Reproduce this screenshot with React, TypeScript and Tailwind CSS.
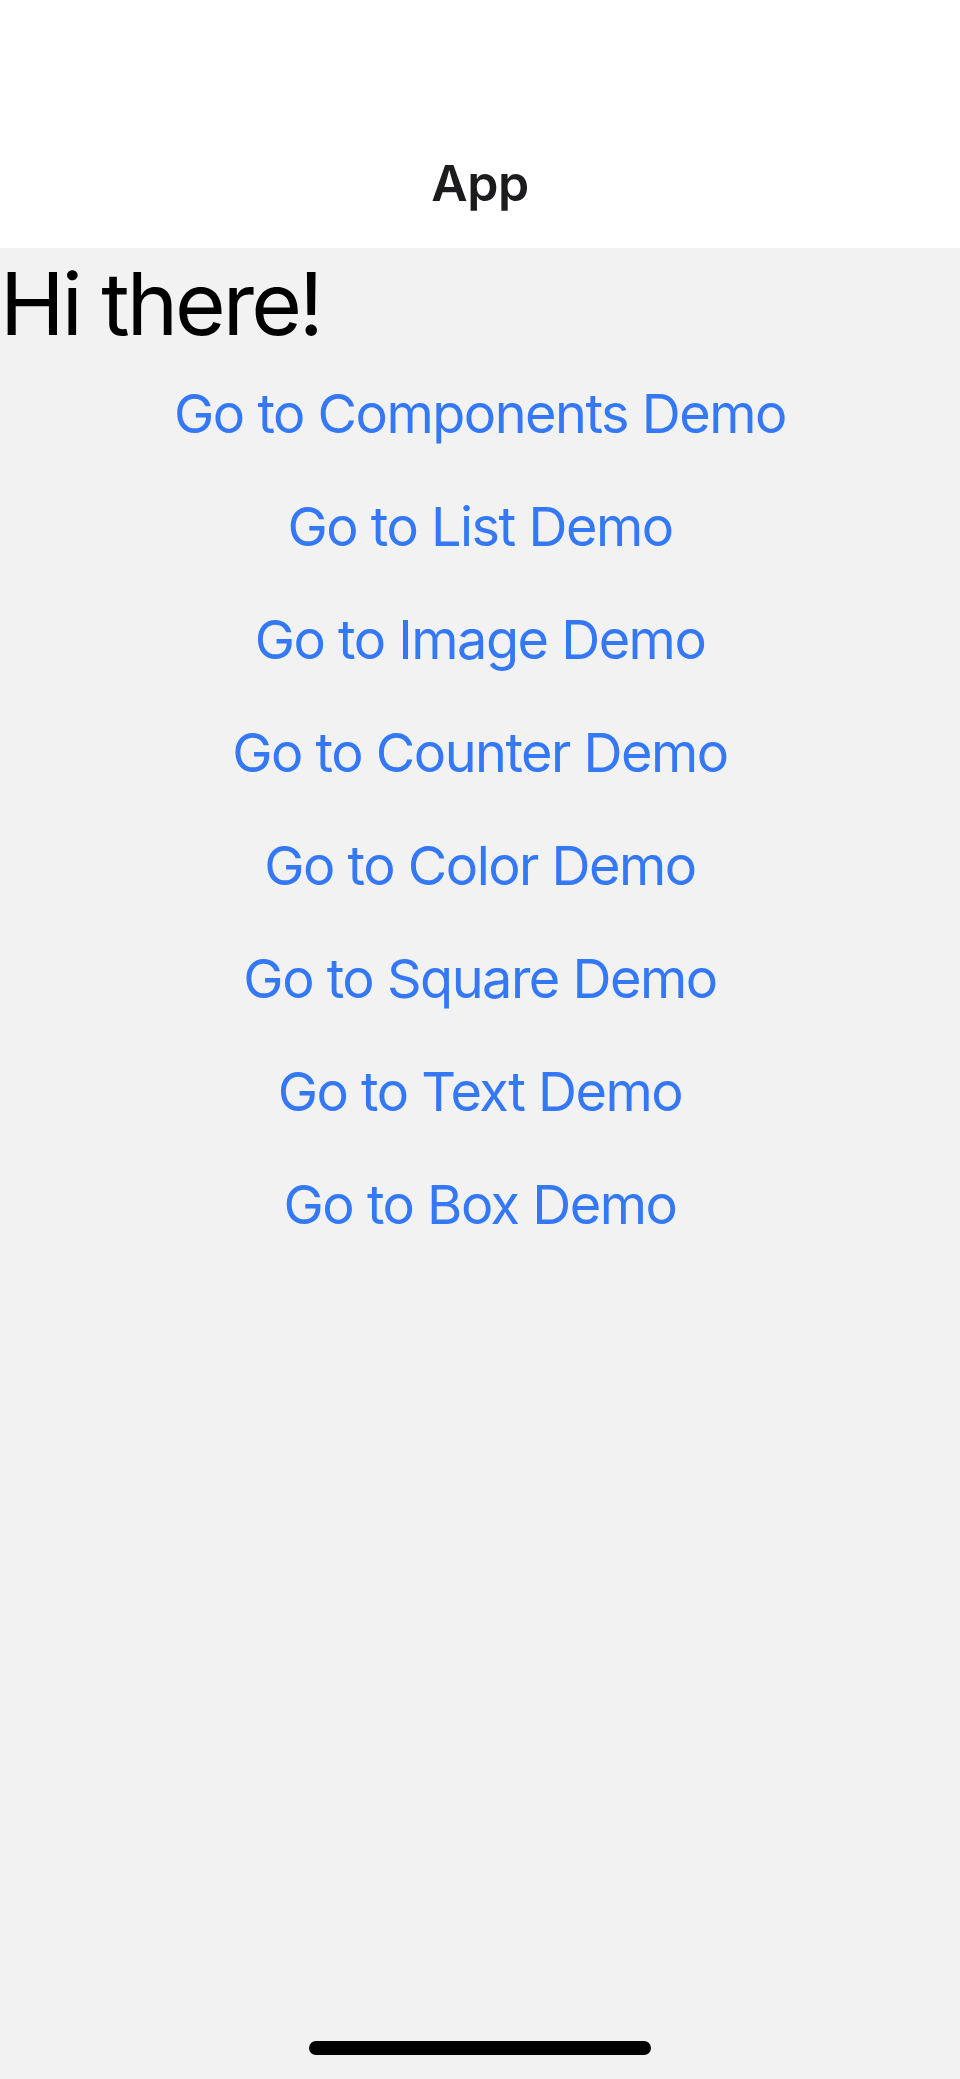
import React from "react";

const links = [
  "Go to Components Demo",
  "Go to List Demo",
  "Go to Image Demo",
  "Go to Counter Demo",
  "Go to Color Demo",
  "Go to Square Demo",
  "Go to Text Demo",
  "Go to Box Demo",
];

export default function App() {
  return (
    <div
      className="w-[960px] h-[2079px] bg-[#f2f2f2] flex flex-col relative overflow-hidden"
      style={{ fontFamily: "Inter, 'Noto Sans', sans-serif" }}
    >
      <header className="h-[248px] bg-white flex justify-center pt-[153px] shrink-0">
        <h1 className="text-[50px] font-semibold text-[#1c1c1e] leading-[60px] tracking-[-0.5px]">App</h1>
      </header>
      <div className="pt-[3px]">
        <p className="text-[87px] text-black leading-[106px] tracking-[-3px]">Hi there!</p>
      </div>
      <nav className="flex flex-col items-center">
        {links.map((l) => (
          <a
            key={l}
            className="text-[54px] text-[#3478f6] leading-[65px] py-[24px] tracking-[-1.5px] cursor-pointer"
          >
            {l}
          </a>
        ))}
      </nav>
      <div className="absolute bottom-[24px] left-[309px] w-[342px] h-[14px] rounded-full bg-black" />
    </div>
  );
}
